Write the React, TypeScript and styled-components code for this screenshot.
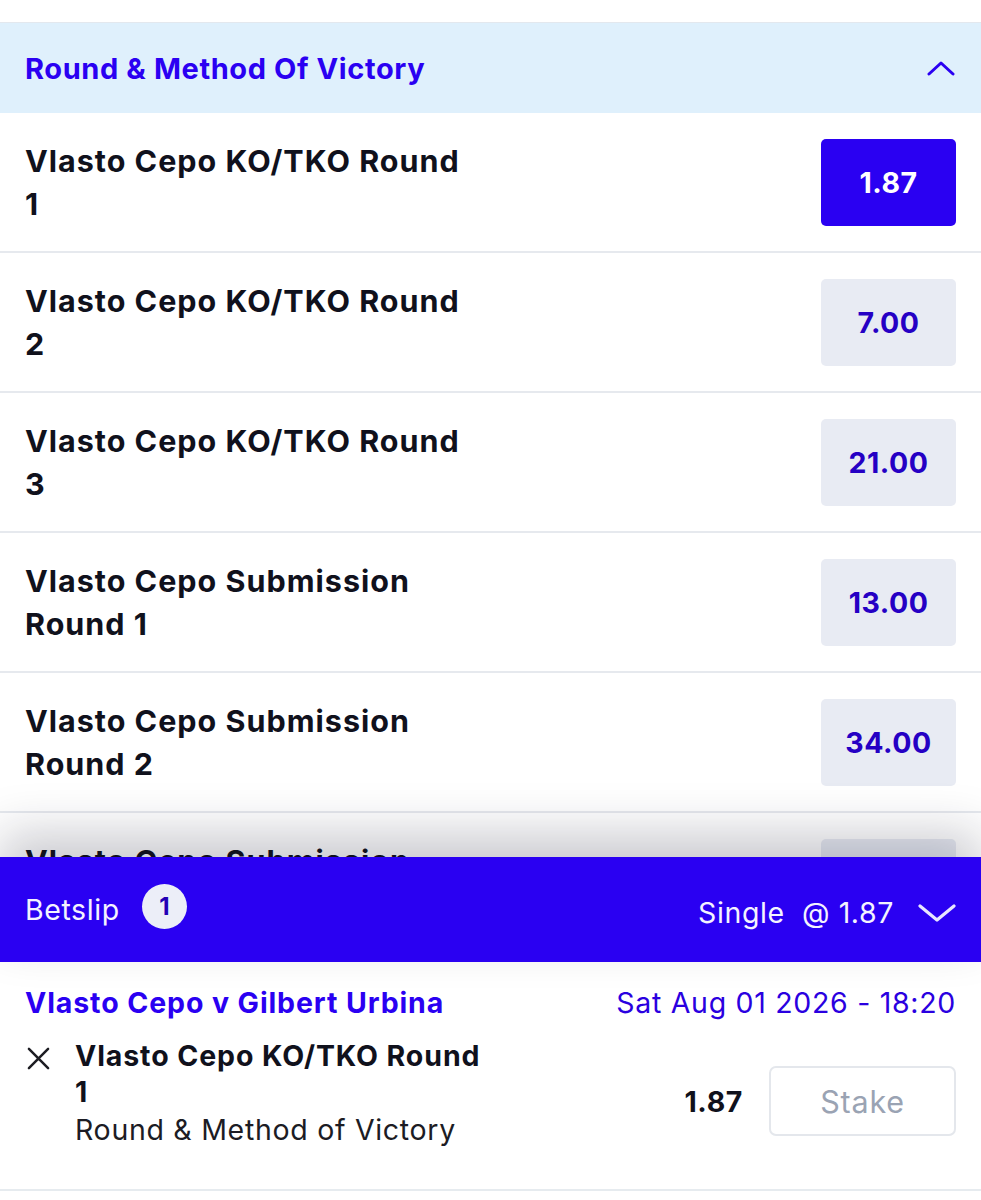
import React from 'react';
import styled, { createGlobalStyle } from 'styled-components';

const GlobalStyle = createGlobalStyle`
    html, body { margin: 0; padding: 0; background: #ffffff; }
    body { font-family: Inter, "Noto Sans", "Liberation Sans", sans-serif; -webkit-font-smoothing: antialiased; }
    * { box-sizing: border-box; }
`;

const BLUE = '#2a00f2';

type Selection = { label: string; price: string; selected?: boolean };

const selections: Selection[] = [
    { label: 'Vlasto Cepo KO/TKO Round 1', price: '1.87', selected: true },
    { label: 'Vlasto Cepo KO/TKO Round 2', price: '7.00' },
    { label: 'Vlasto Cepo KO/TKO Round 3', price: '21.00' },
    { label: 'Vlasto Cepo Submission Round 1', price: '13.00' },
    { label: 'Vlasto Cepo Submission Round 2', price: '34.00' },
    { label: 'Vlasto Cepo Submission Round 3', price: '67.00' },
];

export default function App() {
    return (
        <Page>
            <GlobalStyle />
            <MarketArea>
                <MarketHeader>
                    <MarketTitle>Round &amp; Method Of Victory</MarketTitle>
                    <svg width="28" height="16" viewBox="0 0 28 16" fill="none">
                        <path d="M2 14L14 3L26 14" stroke={BLUE} strokeWidth="3" strokeLinecap="round" strokeLinejoin="round" />
                    </svg>
                </MarketHeader>
                {selections.map((s) => (
                    <OutcomeRow key={s.label}>
                        <OutcomeLabel>{s.label}</OutcomeLabel>
                        <PriceButton selected={!!s.selected}>{s.price}</PriceButton>
                    </OutcomeRow>
                ))}
            </MarketArea>

            <BetslipBar>
                <BarLeft>
                    <span>Betslip</span>
                    <CountBadge>1</CountBadge>
                </BarLeft>
                <BarRight>
                    <span>Single&nbsp;&nbsp;@ 1.87</span>
                    <svg width="38" height="20" viewBox="0 0 38 20" fill="none">
                        <path d="M2 3L19 17L36 3" stroke="#e8e6ff" strokeWidth="3.2" strokeLinecap="round" strokeLinejoin="round" />
                    </svg>
                </BarRight>
            </BetslipBar>

            <SlipPanel>
                <EventLine>
                    <EventName>Vlasto Cepo v Gilbert Urbina</EventName>
                    <EventDate>Sat Aug 01 2026 - 18:20</EventDate>
                </EventLine>
                <BetRow>
                    <RemoveIcon>
                        <svg width="23" height="23" viewBox="0 0 24 24" fill="none">
                            <path d="M2 2L22 22M22 2L2 22" stroke="#1c1c22" strokeWidth="2.6" strokeLinecap="round" />
                        </svg>
                    </RemoveIcon>
                    <BetInfo>
                        <BetTitle>Vlasto Cepo KO/TKO Round 1</BetTitle>
                        <BetMarket>Round &amp; Method of Victory</BetMarket>
                    </BetInfo>
                    <StakeGroup>
                        <BetPrice>1.87</BetPrice>
                        <StakeInput placeholder="Stake" />
                    </StakeGroup>
                </BetRow>
            </SlipPanel>
        </Page>
    );
}

const Page = styled.div`
    width: 981px;
    height: 1200px;
    display: flex;
    flex-direction: column;
    overflow: hidden;
    background: #ffffff;
`;

const MarketArea = styled.div`
    height: 857px;
    flex: none;
    overflow: hidden;
    padding-top: 22px;
`;

const MarketHeader = styled.div`
    height: 91px;
    border-top: 1px solid #e3e8ee;
    background: #dff0fc;
    display: flex;
    align-items: center;
    justify-content: space-between;
    padding: 0 26px 0 25px;
`;

const MarketTitle = styled.div`
    font-size: 29px;
    font-weight: 700;
    color: ${BLUE};
    letter-spacing: 0.6px;
`;

const OutcomeRow = styled.div`
    height: 140px;
    border-bottom: 2px solid #e6e9ee;
    display: flex;
    align-items: center;
    justify-content: space-between;
    padding: 0 25px;
`;

const OutcomeLabel = styled.div`
    max-width: 452px;
    font-size: 30.5px;
    line-height: 43px;
    font-weight: 700;
    color: #10111c;
    letter-spacing: 1px;
`;

const PriceButton = styled.div<{ selected: boolean }>`
    width: 135px;
    height: 87px;
    border-radius: 5px;
    display: flex;
    align-items: center;
    justify-content: center;
    font-size: 28.5px;
    font-weight: 700;
    letter-spacing: 0.5px;
    background: ${(p) => (p.selected ? BLUE : '#e8ebf3')};
    color: ${(p) => (p.selected ? '#ffffff' : '#2500c4')};
`;

const BetslipBar = styled.div`
    position: relative;
    z-index: 1;
    height: 105px;
    flex: none;
    background: ${BLUE};
    box-shadow: 0 -24px 50px rgba(20, 20, 40, 0.22);
    display: flex;
    align-items: center;
    justify-content: space-between;
    padding: 0 25px;
    color: #f4f3ff;
    font-size: 28.5px;
    letter-spacing: 0.6px;
`;

const BarLeft = styled.div`
    display: flex;
    align-items: center;
    gap: 22px;
`;

const CountBadge = styled.div`
    width: 45px;
    height: 45px;
    border-radius: 50%;
    background: #eceef8;
    color: #2300b5;
    font-size: 24px;
    font-weight: 700;
    letter-spacing: 0;
    display: flex;
    align-items: center;
    justify-content: center;
    margin-top: -6px;
`;

const BarRight = styled.div`
    display: flex;
    align-items: center;
    gap: 24px;
    padding-top: 6px;
`;

const SlipPanel = styled.div`
    flex: none;
    height: 229px;
    padding: 20px 25px 0 25px;
    border-bottom: 2px solid #e6ebef;
`;

const EventLine = styled.div`
    display: flex;
    justify-content: space-between;
    align-items: center;
    height: 40px;
`;

const EventName = styled.div`
    font-size: 28.5px;
    font-weight: 700;
    color: ${BLUE};
    letter-spacing: 0.9px;
`;

const EventDate = styled.div`
    font-size: 28.5px;
    font-weight: 400;
    color: #2a00e0;
    letter-spacing: 0.7px;
`;

const BetRow = styled.div`
    display: flex;
    align-items: flex-start;
    margin-top: 16px;
`;

const RemoveIcon = styled.div`
    width: 50px;
    padding: 9px 0 0 2px;
    flex: none;
`;

const BetInfo = styled.div`
    flex: 1;
    max-width: 415px;
`;

const BetTitle = styled.div`
    font-size: 28.5px;
    line-height: 36px;
    font-weight: 700;
    color: #10111c;
    letter-spacing: 0.9px;
`;

const BetMarket = styled.div`
    font-size: 28.5px;
    line-height: 40px;
    color: #1c1c24;
    letter-spacing: 0.7px;
`;

const StakeGroup = styled.div`
    margin-left: auto;
    margin-top: 28px;
    display: flex;
    align-items: center;
    gap: 26px;
`;

const BetPrice = styled.div`
    font-size: 28.5px;
    font-weight: 700;
    color: #10111c;
    letter-spacing: 0.6px;
`;

const StakeInput = styled.input`
    width: 187px;
    height: 70px;
    border: 2px solid #e4e7ec;
    border-radius: 7px;
    font-family: inherit;
    font-size: 30.5px;
    letter-spacing: 0.8px;
    text-align: center;
    outline: none;
    &::placeholder { color: #9aa3b3; }
`;
